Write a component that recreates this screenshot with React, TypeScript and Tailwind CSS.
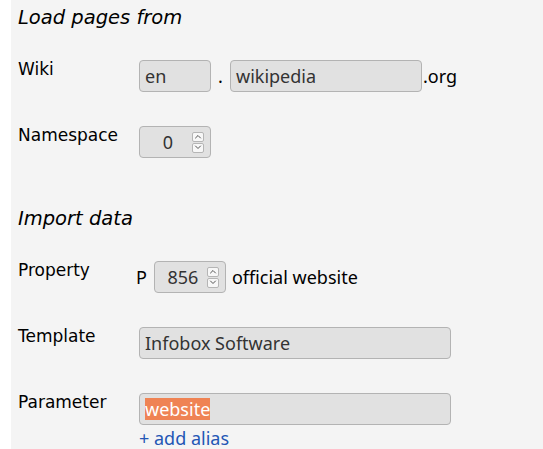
import React from 'react';

const label = "font-['DejaVu_Sans',sans-serif] text-[17px] leading-[18px] text-black";
const heading = "font-['DejaVu_Sans',sans-serif] italic text-[19.5px] h-[28px] leading-[28px] text-black";
const field = "font-['Noto_Sans',sans-serif] text-[18px] text-[#333]";
const box = "h-[32px] rounded-[4px] border border-[#b3b3b3] bg-[#e1e1e1] flex items-center";

function Chevron({ up }: { up?: boolean }) {
  return (
    <svg width="8" height="5" viewBox="0 0 8 5" fill="none">
      <path
        d={up ? 'M1.5 4L4 1.5L6.5 4' : 'M1.5 1L4 3.5L6.5 1'}
        stroke="#555"
        strokeWidth="1"
        strokeLinecap="round"
        strokeLinejoin="round"
      />
    </svg>
  );
}

function Spinner() {
  return (
    <div className="flex flex-col gap-[1px]">
      <div className="w-[12px] h-[10px] rounded-[2px] border border-[#b5b5b5] bg-[#f7f7f7] flex items-center justify-center">
        <Chevron up />
      </div>
      <div className="w-[12px] h-[10px] rounded-[2px] border border-[#b5b5b5] bg-[#f7f7f7] flex items-center justify-center">
        <Chevron />
      </div>
    </div>
  );
}

function NumberBox({ value }: { value: string }) {
  return (
    <div className={`${box} w-[72px] pl-[4px] pr-[6px]`}>
      <span className={`${field} flex-1 text-center leading-[30px]`}>{value}</span>
      <Spinner />
    </div>
  );
}

function Row({ name, children }: { name: string; children: React.ReactNode }) {
  return (
    <div className="flex mb-[34px]">
      <div className={`${label} w-[121px]`}>{name}</div>
      <div className="flex items-center h-[32px]">{children}</div>
    </div>
  );
}

export default function App() {
  return (
    <div className="w-[543px] h-[449px] bg-white overflow-hidden">
      <div className="ml-[11px] h-full bg-[#f4f4f4] pl-[7px] pt-[4px]">
        <div className={`${heading} mb-[28px]`}>Load pages from</div>
        <Row name="Wiki">
          <div className={`${box} w-[72px] pl-[5px]`}>
            <span className={`${field} leading-[30px]`}>en</span>
          </div>
          <span className={`${field} text-black w-[19px] text-center leading-[30px]`}>.</span>
          <div className={`${box} w-[192px] pl-[5px]`}>
            <span className={`${field} leading-[30px]`}>wikipedia</span>
          </div>
          <span className={`${field} text-black ml-[1px] leading-[30px]`}>.org</span>
        </Row>
        <Row name="Namespace">
          <NumberBox value="0" />
        </Row>
        <div className={`${heading} mt-[47px] mb-[28px]`}>Import data</div>
        <Row name="Property">
          <span className={`${field} text-black -ml-[3px] mr-[7px] leading-[30px]`}>P</span>
          <NumberBox value="856" />
          <span className={`${field} text-black ml-[6px] leading-[30px]`}>official website</span>
        </Row>
        <Row name="Template">
          <div className={`${box} w-[312px] pl-[5px]`}>
            <span className={`${field} leading-[30px]`}>Infobox Software</span>
          </div>
        </Row>
        <div className="flex">
          <div className={`${label} w-[121px]`}>Parameter</div>
          <div className="flex flex-col">
            <div className={`${box} w-[312px] pl-[5px] border-[#7d7d7d]`}>
              <span className={`${field} inline-block h-[22px] leading-[22px] bg-[#ef8354] text-white`}>website</span>
            </div>
            <span className="font-['Noto_Sans',sans-serif] text-[18px] leading-[22px] text-[#2356b5] mt-[2px]">+ add alias</span>
          </div>
        </div>
      </div>
    </div>
  );
}
